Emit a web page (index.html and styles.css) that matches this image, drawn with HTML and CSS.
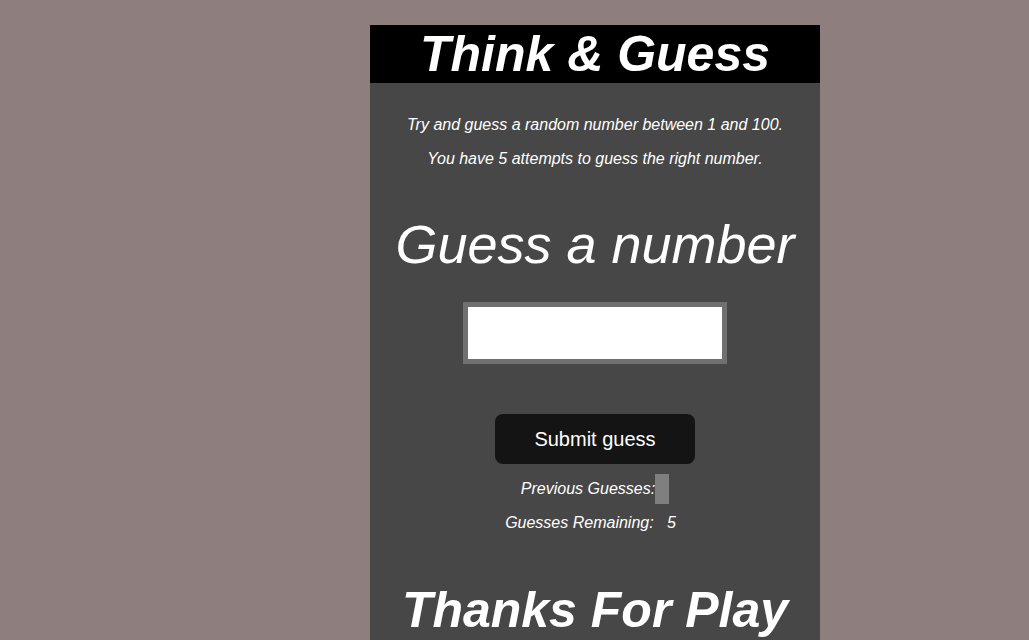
FILE: index.html
```html
<!DOCTYPE html>
<html>
<head>
<meta charset="utf-8">
<link rel="stylesheet" href="styles.css">
</head>
<body>
<main class="game">
  <header class="header"><h1 class="title">Think &amp; Guess</h1></header>
  <section class="content">
    <p class="info">Try and guess a random number between 1 and 100.</p>
    <p class="info">You have 5 attempts to guess the right number.</p>
    <h2 class="prompt">Guess a number</h2>
    <input class="guess-field" type="text">
    <button class="submit">Submit guess</button>
    <p class="stat">Previous Guesses:<span class="guesses"></span></p>
    <p class="stat remaining">Guesses Remaining: &nbsp; 5</p>
    <h2 class="thanks">Thanks For Play</h2>
  </section>
</main>
</body>
</html>
```
FILE: styles.css
```css
html, body { margin: 0; padding: 0; }
body {
  background: #8f7e7e;
  font-family: "Liberation Sans", Arial, sans-serif;
  color: #fff;
  height: 640px;
  overflow: hidden;
}
.game {
  margin: 25px 0 0 370px;
  width: 450px;
  background: #474747;
  min-height: 700px;
}
.header {
  background: #000;
  height: 58px;
  display: flex;
  align-items: center;
  justify-content: center;
}
.title {
  margin: 0;
  font-size: 50px;
  font-weight: bold;
  font-style: italic;
  line-height: 1;
}
.content {
  display: flex;
  flex-direction: column;
  align-items: center;
  padding-top: 33px;
}
.info {
  margin: 0 0 16px;
  font-size: 16px;
  font-style: italic;
  line-height: 18px;
}
.prompt {
  margin: 30px 0 0;
  font-size: 54px;
  font-weight: normal;
  font-style: italic;
  line-height: 60px;
}
.guess-field {
  margin-top: 28px;
  width: 264px;
  height: 62px;
  box-sizing: border-box;
  border: 5px solid #6f706f;
  background: #fff;
  outline: none;
}
.submit {
  margin-top: 50px;
  width: 200px;
  height: 50px;
  background: #141414;
  color: #fff;
  border: none;
  border-radius: 8px;
  font-family: "Liberation Sans", Arial, sans-serif;
  font-size: 20px;
}
.stat {
  margin: 10px 0 0;
  font-size: 16px;
  font-style: italic;
  line-height: 30px;
  display: flex;
  align-items: center;
}
.stat + .stat { margin-top: 4px; }
.remaining { padding-right: 9px; }
.guesses {
  display: inline-block;
  width: 14px;
  height: 30px;
  background: #7f7f7f;
}
.thanks {
  margin: 42px 0 0;
  font-size: 50px;
  font-weight: bold;
  font-style: italic;
  line-height: 60px;
}
```
